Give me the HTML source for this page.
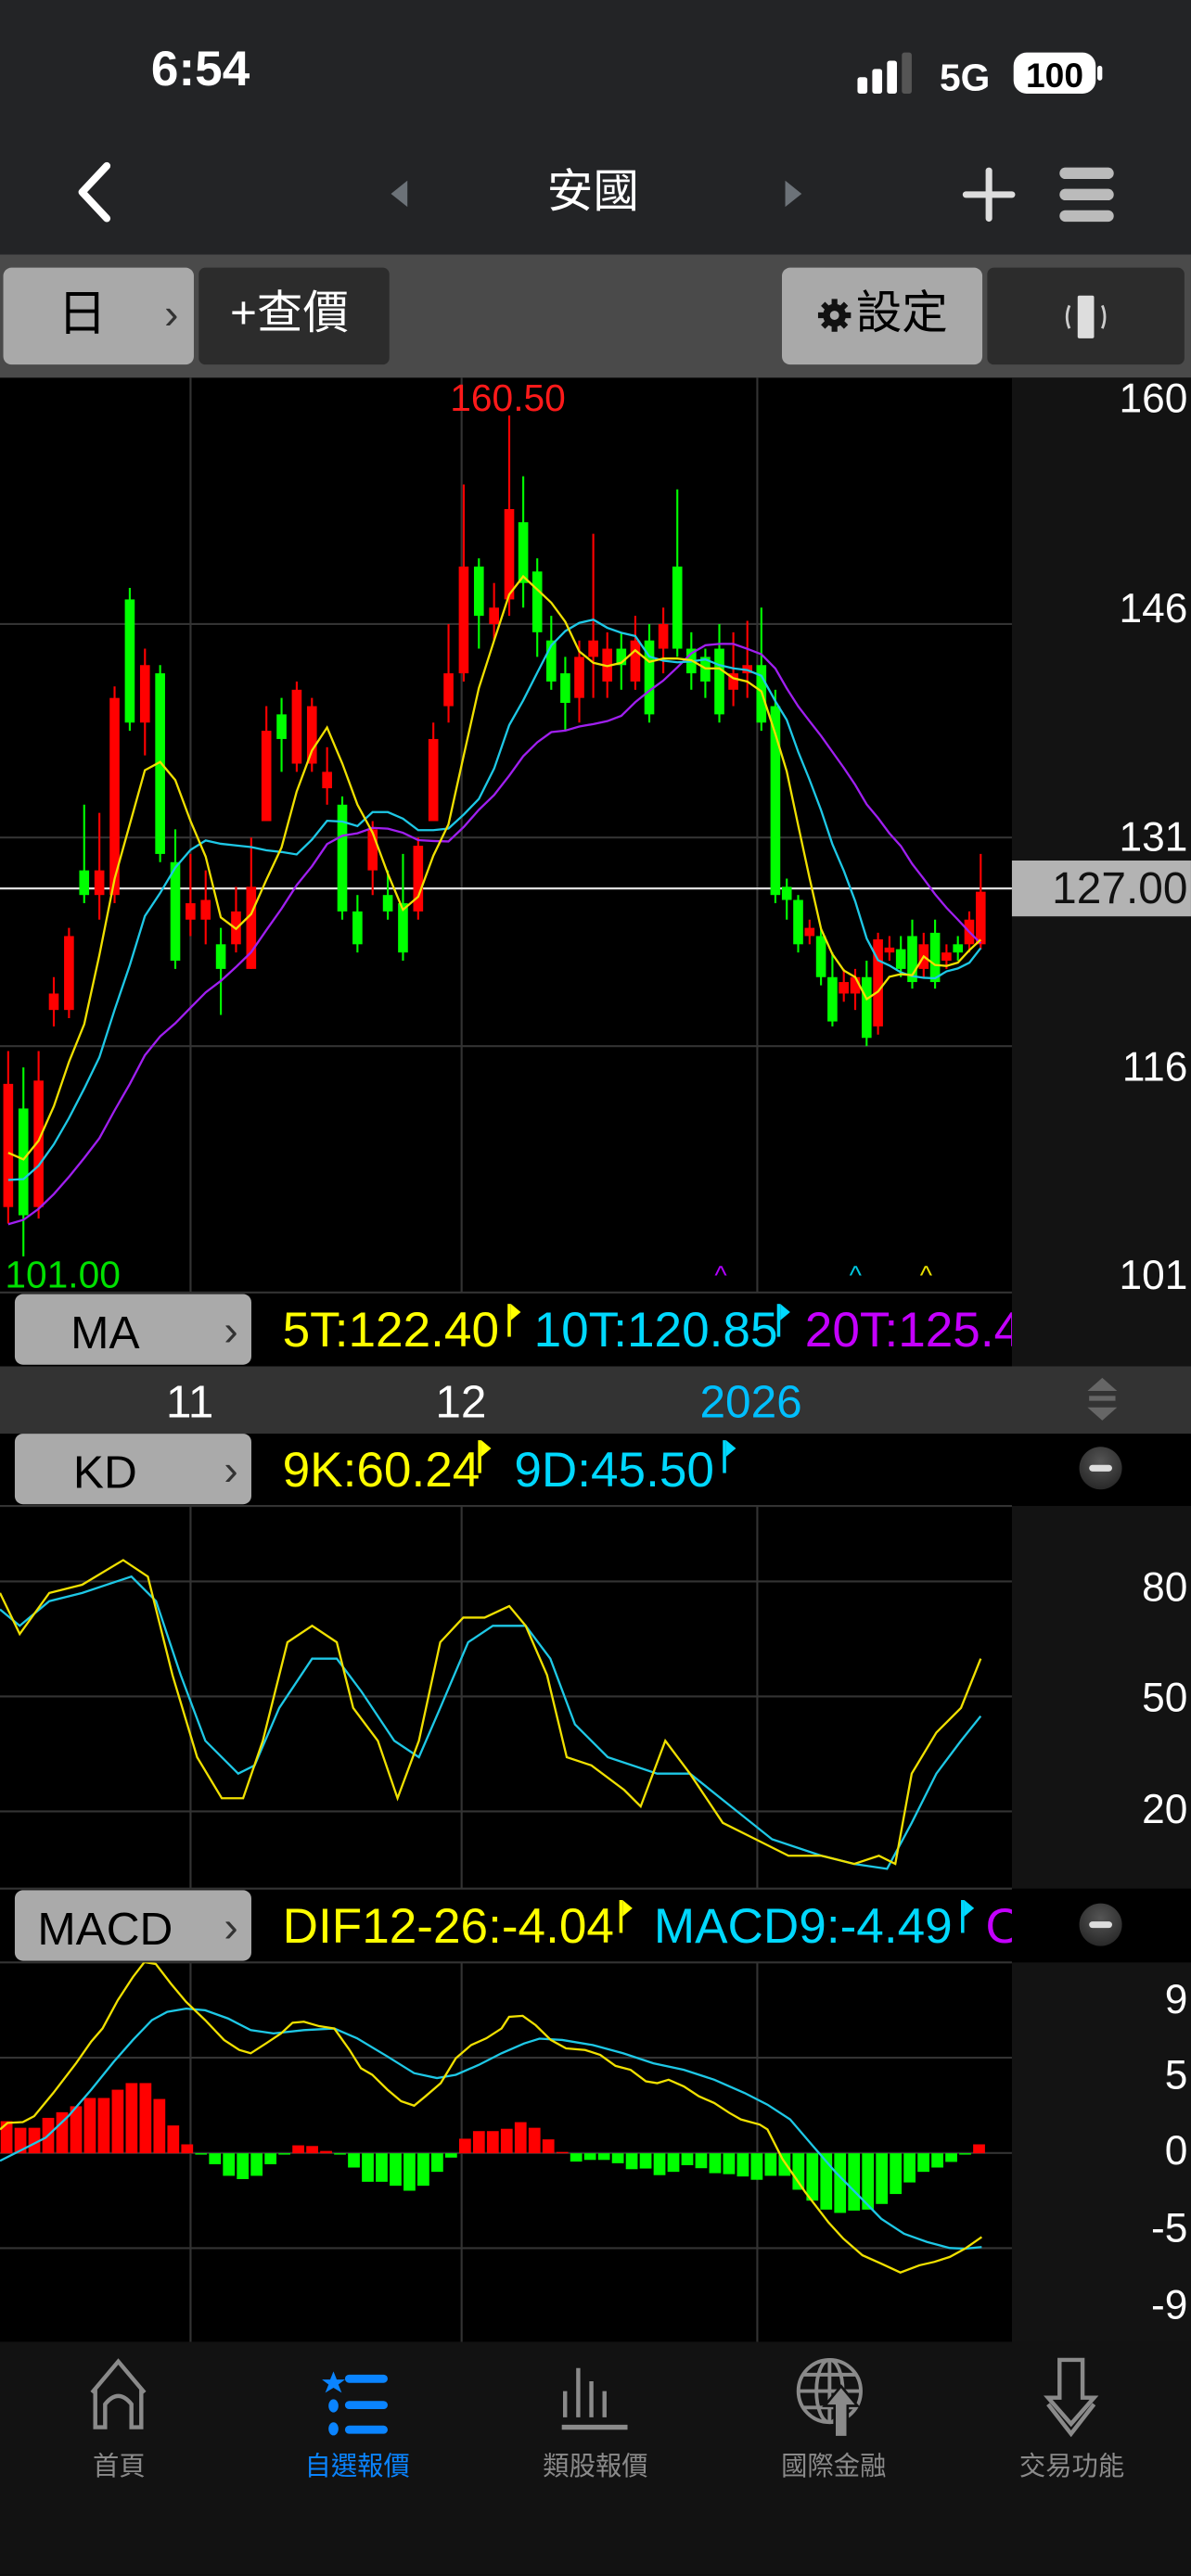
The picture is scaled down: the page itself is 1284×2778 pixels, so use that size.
<!DOCTYPE html>
<html><head><meta charset="utf-8">
<style>
html,body{margin:0;padding:0;width:1284px;height:2778px;overflow:hidden;background:#121212;}
#p{position:absolute;left:0;top:0;width:725px;height:1568px;transform:scale(1.771);transform-origin:0 0;font-family:"Liberation Sans","Noto Sans CJK TC",sans-serif;overflow:hidden;background:#000;}
.a{position:absolute;}
.btnL{position:absolute;background:#a9a9a9;border-radius:5px;}
.btnD{position:absolute;background:#2c2c2c;border-radius:4px;}
.t{position:absolute;white-space:nowrap;line-height:1;}
.ax{position:absolute;right:2px;color:#fff;font-size:25px;line-height:1;}
.ind{position:absolute;left:9px;width:144px;height:43px;background:#aaa;border-radius:5px;color:#000;font-size:28px;}
.ind span{position:absolute;top:8px;width:110px;text-align:center;}
.ind i{position:absolute;right:8px;top:7px;font-style:normal;color:#333;font-size:26px;}
.lab{position:absolute;top:8px;font-size:30px;white-space:nowrap;line-height:1;}
.mc{position:absolute;left:657px;width:26px;height:26px;border-radius:13px;background:radial-gradient(circle at 50% 35%,#555,#1d1d1d);}
.mc:after{content:"";position:absolute;left:6px;top:11px;width:14px;height:3.5px;background:#ddd;border-radius:2px;}
.tab{position:absolute;top:1488px;width:145px;text-align:center;font-size:16px;color:#8a8a8a;}
</style></head><body>
<div id="p">
<div class="a" style="left:0;top:0;width:725px;height:155px;background:#232426"></div>
<div class="t" style="left:92px;top:28px;font-size:30px;font-weight:bold;color:#fff">6:54</div>
<svg class="a" style="left:520px;top:30px" width="160" height="30" viewBox="0 0 160 30">
<rect x="2" y="17" width="6" height="10" rx="1.5" fill="#fff"/><rect x="11" y="12" width="6" height="15" rx="1.5" fill="#fff"/><rect x="20" y="7" width="6" height="20" rx="1.5" fill="#fff"/><rect x="29" y="2" width="6" height="25" rx="1.5" fill="#555"/>
<text x="52" y="25" font-family="Liberation Sans" font-size="23" fill="#fff" font-weight="bold">5G</text>
<rect x="97" y="2" width="50" height="25" rx="8" fill="#fff"/><rect x="148" y="10" width="3" height="9" rx="1.5" fill="#fff"/>
<text x="122" y="23" text-anchor="middle" font-family="Liberation Sans" font-size="21" font-weight="bold" fill="#000">100</text>
</svg>
<svg class="a" style="left:40px;top:96px" width="40" height="44"><polyline points="25,5 10,21 25,37" fill="none" stroke="#fff" stroke-width="4.5" stroke-linecap="round" stroke-linejoin="round"/></svg>
<svg class="a" style="left:235px;top:106px" width="260" height="24"><polygon points="13,4 13,20 3,12" fill="#6c7278"/><polygon points="243,4 243,20 253,12" fill="#6c7278"/></svg>
<div class="t" style="left:333px;top:103px;font-size:28px;color:#fff">安國</div>
<svg class="a" style="left:584px;top:100px" width="100" height="38"><rect x="2" y="16.5" width="32" height="4" rx="2" fill="#ddd"/><rect x="16" y="2" width="4" height="33" rx="2" fill="#ddd"/>
<rect x="61" y="2" width="33" height="7" rx="3.5" fill="#bbb"/><rect x="61" y="15" width="33" height="7" rx="3.5" fill="#bbb"/><rect x="61" y="28" width="33" height="7" rx="3.5" fill="#bbb"/></svg>
<div class="a" style="left:0;top:155px;width:725px;height:75px;background:#4a4a4a"></div>
<div class="btnL" style="left:2px;top:163px;width:116px;height:59px"></div>
<div class="t" style="left:35px;top:177px;font-size:30px;color:#000">日</div>
<div class="t" style="left:100px;top:178px;font-size:26px;color:#333">›</div>
<div class="btnD" style="left:121px;top:163px;width:116px;height:59px"></div>
<div class="t" style="left:140px;top:177px;font-size:28px;color:#fff">+查價</div>
<div class="btnL" style="left:476px;top:163px;width:122px;height:59px"></div>
<svg class="a" style="left:497px;top:181px" width="22" height="22" viewBox="0 0 22 22"><g fill="#111"><circle cx="11" cy="11" r="7"/><g stroke="#111" stroke-width="3.5"><line x1="11" y1="1" x2="11" y2="21"/><line x1="1" y1="11" x2="21" y2="11"/><line x1="4" y1="4" x2="18" y2="18"/><line x1="18" y1="4" x2="4" y2="18"/></g></g><circle cx="11" cy="11" r="2.8" fill="#a9a9a9"/></svg>
<div class="t" style="left:521px;top:177px;font-size:28px;color:#000">設定</div>
<div class="btnD" style="left:601px;top:163px;width:120px;height:59px"></div>
<svg class="a" style="left:643px;top:178px" width="36" height="30"><rect x="13" y="2" width="10" height="26" rx="1" fill="#ddd"/><path d="M8 8 Q5 15 8 22" fill="none" stroke="#ccc" stroke-width="1.6"/><path d="M28 8 Q31 15 28 22" fill="none" stroke="#ccc" stroke-width="1.6"/></svg>

<div class="a" style="left:616px;top:230px;width:109px;height:602px;background:#131313"></div>
<div class="a" style="left:616px;top:917px;width:109px;height:233px;background:#131313"></div>
<div class="a" style="left:616px;top:1195px;width:109px;height:231px;background:#131313"></div>
<div class="a" style="left:0;top:832px;width:725px;height:41px;background:#333"></div>

<svg id="g" class="a" style="left:0;top:0" width="725" height="1568" viewBox="0 0 725 1568"></svg>

<div class="ax" style="top:231px">160</div>
<div class="ax" style="top:359px">146</div>
<div class="ax" style="top:498px">131</div>
<div class="ax" style="top:638px">116</div>
<div class="ax" style="top:765px">101</div>
<div class="a" style="left:616px;top:524px;width:109px;height:34px;background:#b3b3b3"></div>
<div class="t" style="right:2px;top:528px;font-size:27px;color:#111">127.00</div>
<div class="t" style="left:274px;top:231px;font-size:23px;color:#ff1a1a">160.50</div>
<div class="t" style="left:3px;top:765px;font-size:23px;color:#00e000">101.00</div>
<div class="t" style="left:435px;top:770px;font-size:16px;color:#b000ff">^</div>
<div class="t" style="left:517px;top:770px;font-size:16px;color:#00c8e0">^</div>
<div class="t" style="left:560px;top:770px;font-size:16px;color:#e8e000">^</div>

<div class="ind" style="top:788px"><span>MA</span><i>›</i></div>
<div class="a" style="left:155px;top:788px;width:461px;height:44px;overflow:hidden">
<div class="lab" style="left:17px;color:#ffff00">5T:122.40</div>
<div class="lab" style="left:170px;color:#00d8ff">10T:120.85</div>
<div class="lab" style="left:335px;color:#c400ff">20T:125.4</div>
<div class="a" style="left:154px;top:6px;width:2px;height:20px;background:#ffff00"></div><div class="a" style="left:156px;top:6px;border-left:6px solid #ffff00;border-top:5px solid transparent;border-bottom:5px solid transparent"></div>
<div class="a" style="left:318px;top:6px;width:2px;height:20px;background:#00d8ff"></div><div class="a" style="left:320px;top:6px;border-left:6px solid #00d8ff;border-top:5px solid transparent;border-bottom:5px solid transparent"></div>
</div>
<div class="t" style="left:101px;top:840px;font-size:28px;color:#fff">11</div>
<div class="t" style="left:265px;top:840px;font-size:28px;color:#fff">12</div>
<div class="t" style="left:426px;top:840px;font-size:28px;color:#00bfff">2026</div>
<svg class="a" style="left:660px;top:837px" width="22" height="30"><polygon points="11,2 20,10 2,10" fill="#666"/><rect x="3" y="13" width="16" height="3" fill="#666"/><polygon points="11,28 20,20 2,20" fill="#666"/></svg>
<div class="ind" style="top:873px"><span>KD</span><i>›</i></div>
<div class="lab" style="left:172px;top:881px;color:#ffff00">9K:60.24</div>
<div class="lab" style="left:313px;top:881px;color:#00d8ff">9D:45.50</div>
<div class="a" style="left:291px;top:877px;width:2px;height:20px;background:#ffff00"></div><div class="a" style="left:293px;top:877px;border-left:6px solid #ffff00;border-top:5px solid transparent;border-bottom:5px solid transparent"></div>
<div class="a" style="left:440px;top:877px;width:2px;height:20px;background:#00d8ff"></div><div class="a" style="left:442px;top:877px;border-left:6px solid #00d8ff;border-top:5px solid transparent;border-bottom:5px solid transparent"></div>
<div class="mc" style="top:881px"></div>
<div class="ax" style="top:955px">80</div>
<div class="ax" style="top:1022px">50</div>
<div class="ax" style="top:1090px">20</div>
<div class="ind" style="top:1151px"><span>MACD</span><i>›</i></div>
<div class="a" style="left:155px;top:1151px;width:461px;height:44px;overflow:hidden">
<div class="lab" style="left:17px;color:#ffff00">DIF12-26:-4.04</div>
<div class="lab" style="left:243px;color:#00d8ff">MACD9:-4.49</div>
<div class="lab" style="left:445px;color:#c400ff">O</div>
<div class="a" style="left:222px;top:6px;width:2px;height:20px;background:#ffff00"></div><div class="a" style="left:224px;top:6px;border-left:6px solid #ffff00;border-top:5px solid transparent;border-bottom:5px solid transparent"></div>
<div class="a" style="left:430px;top:6px;width:2px;height:20px;background:#00d8ff"></div><div class="a" style="left:432px;top:6px;border-left:6px solid #00d8ff;border-top:5px solid transparent;border-bottom:5px solid transparent"></div>
</div>
<div class="mc" style="top:1159px"></div>
<div class="ax" style="top:1206px">9</div>
<div class="ax" style="top:1252px">5</div>
<div class="ax" style="top:1298px">0</div>
<div class="ax" style="top:1345px">-5</div>
<div class="ax" style="top:1392px">-9</div>

<div class="a" style="left:0;top:1426px;width:725px;height:142px;background:#121212"></div>
<svg class="a" style="left:0;top:1426px" width="725" height="60" viewBox="0 0 725 60">
<g fill="none" stroke="#8a8a8a" stroke-width="2.5">
<path d="M56 31 L72 12 L88 31 M58 28 V52 H64 V38 Q72 28 80 38 V52 H86 V28"/>
</g>
<g fill="#0a84ff"><polygon points="203,18 205,23 210,23 206,26 208,31 203,28 198,31 200,26 196,23 201,23"/>
<rect x="210" y="20" width="26" height="5" rx="2.5"/><ellipse cx="203" cy="39" rx="3" ry="4"/><rect x="210" y="36" width="26" height="5" rx="2.5"/><ellipse cx="203" cy="53" rx="3" ry="4"/><rect x="210" y="51" width="26" height="5" rx="2.5"/></g>
<g stroke="#8a8a8a" stroke-width="2.5" fill="none"><path d="M344 30V46 M352 16V46 M360 24V46 M368 30V46"/><path d="M342 52H382" stroke-width="3"/></g>
<g stroke="#8a8a8a" stroke-width="2.2" fill="none"><circle cx="505" cy="30" r="19"/><ellipse cx="505" cy="30" rx="8" ry="19"/><path d="M486 30H524 M489 20H521 M489 40H521 M505 11V49"/></g>
<polygon points="512,27 522,39 516,39 516,58 508,58 508,39 502,39" fill="#8a8a8a" stroke="#121212" stroke-width="1.5"/>
<g stroke="#8a8a8a" stroke-width="2.5" fill="none"><path d="M645 11H659V34H666L652 50L638 34H645Z"/><path d="M638 38L652 56L666 38"/></g>
</svg>
<div class="tab" style="left:0">首頁</div>
<div class="tab" style="left:145px;color:#0a84ff">自選報價</div>
<div class="tab" style="left:290px">類股報價</div>
<div class="tab" style="left:435px">國際金融</div>
<div class="tab" style="left:580px">交易功能</div>
</div>
<script>
(function(){
var NS="http://www.w3.org/2000/svg",g=document.getElementById("g");
function el(n,a){var e=document.createElementNS(NS,n);for(var k in a)e.setAttribute(k,a[k]);g.appendChild(e);return e;}
var defs=el("defs",{});
function clip(id,y,h){var cp=document.createElementNS(NS,"clipPath");cp.setAttribute("id",id);var r=document.createElementNS(NS,"rect");r.setAttribute("x",0);r.setAttribute("y",y);r.setAttribute("width",616);r.setAttribute("height",h);cp.appendChild(r);defs.appendChild(cp);}
clip("c1",230,557);clip("c2",917,233);clip("c3",1195,231);
var gc="#333";
[[230,787],[917,1150],[1195,1426]].forEach(function(s){[116,281,461].forEach(function(x){el("line",{x1:x,x2:x,y1:s[0],y2:s[1],stroke:gc,"stroke-width":1.2});});});
[380,510,637,787].forEach(function(y){el("line",{x1:0,x2:616,y1:y,y2:y,stroke:gc,"stroke-width":1.2});});
[917,963,1033,1103,1150].forEach(function(y){el("line",{x1:0,x2:616,y1:y,y2:y,stroke:gc,"stroke-width":1.2});});
[1195,1253,1311,1369].forEach(function(y){el("line",{x1:0,x2:616,y1:y,y2:y,stroke:gc,"stroke-width":1.2});});
el("line",{x1:0,x2:616,y1:541,y2:541,stroke:"#ddd","stroke-width":1.3});
var C=[[660,735,'r',640,745],[675,740,'g',650,765],[658,735,'r',640,742],[605,615,'r',595,625],[570,615,'r',565,620],[530,545,'g',490,550],[530,545,'r',495,560],[425,545,'r',418,550],[365,440,'g',358,445],[405,440,'r',395,460],[410,520,'g',405,525],[525,585,'g',505,590],[550,560,'r',520,570],[548,560,'r',530,575],[575,590,'g',565,618],[555,575,'r',540,580],[540,590,'r',510,590],[445,500,'r',430,500],[435,450,'g',425,470],[420,465,'r',415,470],[430,465,'r',425,470],[470,480,'r',455,490],[490,555,'g',485,560],[555,575,'g',545,580],[505,530,'r',500,545],[545,555,'g',530,560],[550,580,'g',520,585],[515,555,'r',510,560],[450,500,'r',440,500],[410,430,'r',380,440],[345,410,'r',295,415],[345,375,'g',340,395],[370,380,'r',355,390],[310,365,'r',253,375],[318,355,'g',290,370],[348,385,'g',340,400],[390,415,'g',375,420],[410,428,'g',400,445],[400,425,'r',390,440],[390,400,'r',325,425],[395,415,'r',385,425],[395,405,'g',385,420],[390,415,'r',375,420],[390,435,'g',380,440],[380,395,'r',370,410],[345,395,'g',298,400],[395,410,'g',385,420],[400,415,'g',395,425],[395,435,'g',380,440],[410,420,'r',385,430],[405,410,'r',378,425],[405,440,'g',370,445],[430,545,'g',420,550],[540,548,'g',535,560],[548,575,'g',545,580],[565,570,'r',560,575],[570,595,'g',565,600],[595,622,'g',580,625],[598,605,'r',590,610],[595,605,'r',590,615],[595,632,'g',585,637],[572,625,'r',568,630],[577,580,'r',570,585],[578,590,'g',570,595],[570,598,'g',560,602],[575,590,'r',568,595],[568,598,'g',560,602],[580,585,'r',575,590],[575,580,'g',570,585],[560,575,'r',555,580],[543,575,'r',520,578]];
var n=C.length;
var A=[[0,5],[8,79],[33,310],[52,472],[70,597]];
function X(i){for(var k=0;k<A.length-1;k++){if(i<=A[k+1][0]){var t=(i-A[k][0])/(A[k+1][0]-A[k][0]);return A[k][1]+t*(A[k+1][1]-A[k][1]);}}return 597;}
var cg=el("g",{"clip-path":"url(#c1)"});
function ap(parent,name,a){var e=document.createElementNS(NS,name);for(var k in a)e.setAttribute(k,a[k]);parent.appendChild(e);return e;}
var closes=[];for(var k=0;k<20;k++)closes.push(800-k*5);
C.forEach(function(c,i){var col=c[2]=='r'?"#ff0000":"#00ff00";var x=X(i);
ap(cg,"line",{x1:x,x2:x,y1:c[3],y2:c[4],stroke:col,"stroke-width":1.2});
ap(cg,"rect",{x:x-3,y:c[0],width:6,height:Math.max(1.5,c[1]-c[0]),fill:col});
closes.push(c[2]=='r'?c[0]:c[1]);});
function ma(p,col){var pts=[];for(var i=0;i<n;i++){var s=0;for(var j=0;j<p;j++)s+=closes[20+i-j];pts.push(X(i).toFixed(1)+","+(s/p).toFixed(1));}
ap(cg,"polyline",{points:pts.join(" "),fill:"none",stroke:col,"stroke-width":1.3});}
ma(20,"#a01ff0");ma(10,"#1ec8e6");ma(5,"#f0e000");
var K=[[0,970],[12,995],[30,970],[50,965],[75,950],[90,960],[105,1020],[120,1070],[135,1095],[148,1095],[160,1060],[175,1000],[190,990],[205,1000],[215,1040],[230,1060],[242,1095],[255,1060],[268,1000],[282,985],[295,985],[310,978],[320,990],[333,1020],[345,1070],[360,1075],[380,1090],[390,1100],[405,1060],[420,1080],[440,1110],[460,1120],[480,1130],[500,1130],[520,1135],[535,1130],[545,1135],[555,1080],[570,1055],[585,1040],[597,1010]];
var D=[[0,980],[12,990],[30,975],[50,970],[80,960],[95,975],[110,1020],[125,1060],[145,1080],[155,1075],[170,1040],[190,1010],[205,1010],[220,1030],[240,1060],[255,1070],[268,1040],[285,1000],[300,990],[320,990],[335,1010],[350,1050],[370,1070],[400,1080],[420,1080],[445,1100],[470,1120],[500,1130],[520,1135],[540,1138],[555,1110],[570,1080],[585,1060],[597,1045]];
var kg=el("g",{"clip-path":"url(#c2)"});
function pl(par,a,col){ap(par,"polyline",{points:a.map(function(p){return p[0]+","+p[1];}).join(" "),fill:"none",stroke:col,"stroke-width":1.3});}
pl(kg,D,"#1ec8e6");pl(kg,K,"#f0e000");
var mg=el("g",{"clip-path":"url(#c3)"});
var H=[805,825,825,795,778,760,735,735,710,690,690,738,818,875,905,935,970,980,970,935,905,878,880,895,902,945,988,988,1000,1015,1000,958,915,858,835,835,828,808,825,860,898,927,922,922,932,950,948,968,958,938,947,962,965,972,982,970,970,1012,1045,1072,1082,1075,1072,1055,1025,990,958,945,928,905,875];
function zy(v){return (2000+v/2.8)/1.771;}var z0=zy(902);
H.forEach(function(v,i){var x=4+i*(592/70);var y=zy(v);var up=y<z0;ap(mg,"rect",{x:x-3.6,y:Math.min(y,z0),width:7.2,height:Math.max(0.8,Math.abs(y-z0)),fill:up?"#ff0000":"#00ff00"});});
var Y=[[0,830],[10,810],[30,808],[45,790],[70,720],[100,630],[120,565],[135,525],[155,440],[175,370],[190,325],[205,330],[225,390],[245,445],[270,500],[295,560],[315,590],[330,600],[350,570],[370,540],[385,508],[400,505],[420,518],[440,525],[460,590],[475,645],[490,665],[510,710],[528,745],[545,758],[560,730],[580,690],[600,615],[620,575],[640,555],[660,525],[670,490],[688,487],[705,515],[725,560],[745,585],[770,590],[790,605],[810,638],[830,650],[850,685],[865,690],[880,680],[900,700],[920,730],[940,750],[960,780],[975,800],[1000,815],[1010,830],[1030,920],[1060,1020],[1090,1110],[1110,1160],[1135,1210],[1160,1235],[1185,1262],[1210,1240],[1230,1230],[1250,1215],[1270,1190],[1292,1155]];
var Cy=[[0,925],[30,890],[60,855],[90,790],[120,710],[150,625],[175,560],[200,500],[220,475],[245,465],[270,470],[300,495],[330,530],[360,540],[400,530],[440,525],[470,555],[510,610],[545,660],[575,675],[600,665],[630,635],[660,600],[690,570],[710,556],[740,560],[780,575],[820,600],[860,630],[900,650],[940,680],[980,720],[1010,755],[1040,800],[1070,880],[1100,960],[1130,1030],[1160,1100],[1190,1145],[1220,1170],[1250,1188],[1270,1190],[1292,1185]];
function cv(a){return a.map(function(p){return [(p[0]/2.162).toFixed(1),zy(p[1]).toFixed(1)];});}
pl(mg,cv(Cy),"#1ec8e6");pl(mg,cv(Y),"#f0e000");
})();
</script>
</body></html>
